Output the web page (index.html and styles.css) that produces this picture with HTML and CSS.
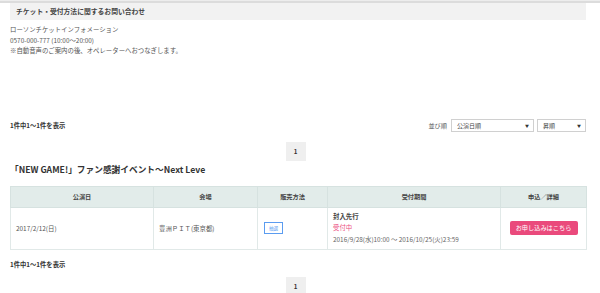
FILE: index.html
```html
<!DOCTYPE html>
<html lang="ja">
<head>
<meta charset="utf-8">
<link rel="stylesheet" href="styles.css">
</head>
<body>
<div class="topline"></div>
<div class="wrap">
  <section class="contact">
    <h2 class="sec-head">チケット・受付方法に関するお問い合わせ</h2>
    <div class="contact-body">
      <p>ローソンチケットインフォメーション</p>
      <p>0570-000-777 (10:00～20:00)</p>
      <p>※自動音声のご案内の後、オペレーターへおつなぎします。</p>
    </div>
  </section>

  <div class="result-bar">
    <div class="count">1件中1～1件を表示</div>
    <div class="sort">
      <span class="sort-label">並び順</span>
      <div class="select sel-wide"><span>公演日順</span><span class="arrow">▼</span></div>
      <div class="select sel-narrow"><span>昇順</span><span class="arrow">▼</span></div>
    </div>
  </div>

  <div class="pager"><span class="page">1</span></div>

  <h3 class="event-title">「NEW GAME!」ファン感謝イベント～Next Leve</h3>

  <table class="perf">
    <colgroup>
      <col class="c1"><col class="c2"><col class="c3"><col class="c4"><col class="c5">
    </colgroup>
    <thead>
      <tr><th>公演日</th><th>会場</th><th>販売方法</th><th>受付期間</th><th>申込／詳細</th></tr>
    </thead>
    <tbody>
      <tr>
        <td>2017/2/12(日)</td>
        <td>豊洲ＰＩＴ(東京都)</td>
        <td><span class="badge">抽選</span></td>
        <td class="period">
          <div class="p-name">封入先行</div>
          <div class="p-status">受付中</div>
          <div class="p-date">2016/9/28(水)10:00 ～ 2016/10/25(火)23:59</div>
        </td>
        <td class="apply"><a class="btn">お申し込みはこちら</a></td>
      </tr>
    </tbody>
  </table>

  <div class="count count-bottom">1件中1～1件を表示</div>
  <div class="pager pager-bottom"><span class="page">1</span></div>
</div>
</body>
</html>
```

FILE: styles.css
```css
html, body {
  margin: 0;
  padding: 0;
  background: #fff;
}
body {
  font-family: "Noto Sans CJK JP", "Noto Sans", sans-serif;
  color: #555;
  font-size: 6.5px;
  overflow: hidden;
}
.topline {
  height: 2px;
  border-top: 1px solid #ededed;
  background: #dcdcdc;
}
.wrap {
  width: 576px;
  margin-left: 10px;
}
.sec-head {
  margin: 0;
  height: 17px;
  line-height: 16px;
  background: #f2f2f2;
  padding-left: 6px;
  font-size: 6.8px;
  font-weight: bold;
  color: #444;
}
.contact-body {
  padding-top: 5px;
}
.contact-body p {
  margin: 0;
  line-height: 10.5px;
  font-size: 6.4px;
  color: #555;
}
.result-bar {
  display: flex;
  justify-content: space-between;
  align-items: center;
  margin-top: 62px;
  height: 14px;
}
.count {
  font-size: 6.3px;
  font-weight: bold;
  color: #333;
}
.sort {
  display: flex;
  align-items: center;
  gap: 3px;
}
.sort-label {
  font-size: 6.2px;
  color: #555;
  margin-right: 1px;
}
.select {
  height: 13px;
  box-sizing: border-box;
  border: 1px solid #d0d0d0;
  background: #fff;
  display: flex;
  align-items: center;
  justify-content: space-between;
  padding: 0 4px 0 5px;
  font-size: 6px;
  color: #444;
}
.sel-wide { width: 83px; }
.sel-narrow { width: 49px; }
.arrow {
  font-size: 4px;
  color: #333;
}
.pager {
  display: flex;
  justify-content: center;
  padding-right: 5px;
  margin-top: 9px;
}
.page {
  width: 20px;
  height: 19px;
  line-height: 19px;
  text-align: center;
  background: #efefef;
  font-size: 6.2px;
  font-weight: bold;
  color: #333;
}
.event-title {
  margin: 0;
  margin-top: 2px;
  line-height: 13px;
  font-size: 8.7px;
  font-weight: bold;
  color: #333;
}
.perf {
  margin-top: 10px;
  width: 576px;
  border-collapse: collapse;
  table-layout: fixed;
}
.c1 { width: 143px; }
.c2 { width: 104px; }
.c3 { width: 70px; }
.c4 { width: 173px; }
.c5 { width: 86px; }
.perf th {
  height: 20px;
  padding: 0;
  background: #e2ecea;
  border: 1px solid #d6e2e0;
  font-size: 6.2px;
  font-weight: bold;
  color: #444;
  text-align: center;
}
.perf td {
  height: 41px;
  padding: 0 5px;
  border: 1px solid #e1e9e8;
  font-size: 6.4px;
  color: #555;
  vertical-align: middle;
}
.badge {
  display: inline-block;
  margin-left: 1px;
  width: 19px;
  height: 12px;
  box-sizing: border-box;
  border: 1px solid #5b9cf0;
  line-height: 10px;
  text-align: center;
  font-size: 4.6px;
  color: #5b9cf0;
  background: #fff;
}
.period div {
  line-height: 11.5px;
}
.p-name {
  font-weight: bold;
  color: #444;
}
.p-status {
  color: #ec4e80;
}
.p-date {
  color: #666;
}
.apply {
  text-align: center;
}
.btn {
  display: inline-block;
  width: 68px;
  height: 14px;
  line-height: 14px;
  border-radius: 2px;
  background: #ea4a7c;
  color: #fff;
  font-size: 6.2px;
  text-align: center;
}
.count-bottom {
  margin-top: 11px;
  line-height: 8px;
}
.pager-bottom {
  margin-top: 8px;
}
```
